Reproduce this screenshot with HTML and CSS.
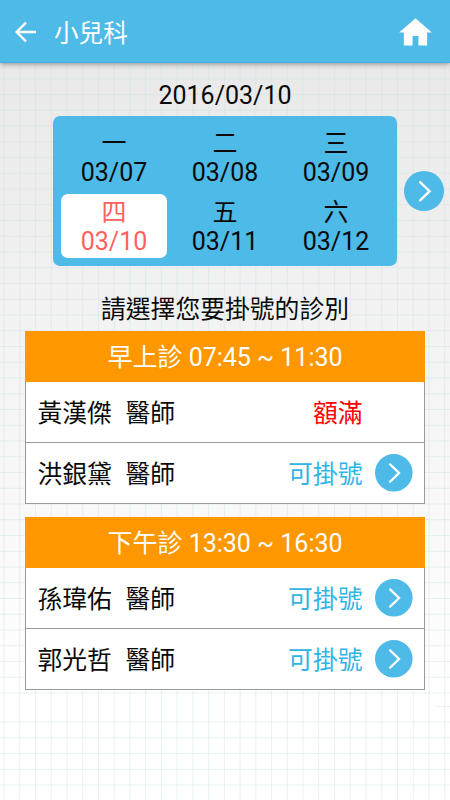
FILE: index.html
```html
<!DOCTYPE html>
<html lang="zh-Hant">
<head>
<meta charset="utf-8">
<meta name="viewport" content="width=device-width, initial-scale=1">
<title>小兒科</title>
<link rel="stylesheet" href="styles.css">
</head>
<body>
<div class="app">
  <header class="bar">
    <svg class="back" viewBox="0 0 22 22"><path d="M21 11H2M11 1.6L1.6 11l9.4 9.4"/></svg>
    <h1>小兒科</h1>
    <svg class="home" viewBox="0 0 34 30"><path d="M17 .8L33.8 15.6H29V29H20V19h-6v10H5V15.6H.2z"/></svg>
  </header>
  <main>
    <p class="today">2016/03/10</p>
    <section class="picker">
      <div class="week">
        <div class="day"><span>一</span><span>03/07</span></div>
        <div class="day"><span>二</span><span>03/08</span></div>
        <div class="day"><span>三</span><span>03/09</span></div>
        <div class="day selected"><span>四</span><span>03/10</span></div>
        <div class="day"><span>五</span><span>03/11</span></div>
        <div class="day"><span>六</span><span>03/12</span></div>
      </div>
      <svg class="go next" viewBox="0 0 38 38"><circle cx="19" cy="19" r="19"/><path d="M15.3 10.5l9 8.7-9 8.7"/></svg>
    </section>
    <p class="prompt">請選擇您要掛號的診別</p>
    <section class="session">
      <h2>早上診 07:45 ~ 11:30</h2>
      <div class="row"><span class="name">黃漢傑</span><span>醫師</span><span class="status full">額滿</span></div>
      <div class="row"><span class="name">洪銀黛</span><span>醫師</span><span class="status">可掛號</span><svg class="go" viewBox="0 0 38 38"><circle cx="19" cy="19" r="19"/><path d="M15.3 10.5l9 8.7-9 8.7"/></svg></div>
    </section>
    <section class="session">
      <h2>下午診 13:30 ~ 16:30</h2>
      <div class="row"><span class="name">孫瑋佑</span><span>醫師</span><span class="status">可掛號</span><svg class="go" viewBox="0 0 38 38"><circle cx="19" cy="19" r="19"/><path d="M15.3 10.5l9 8.7-9 8.7"/></svg></div>
      <div class="row"><span class="name">郭光哲</span><span>醫師</span><span class="status">可掛號</span><svg class="go" viewBox="0 0 38 38"><circle cx="19" cy="19" r="19"/><path d="M15.3 10.5l9 8.7-9 8.7"/></svg></div>
    </section>
  </main>
</div>
</body>
</html>
```
FILE: styles.css
```css
* { box-sizing: border-box; }
body { margin: 0; }
h1, h2, p { margin: 0; font-weight: 400; }

.app {
  width: 450px;
  height: 800px;
  overflow: hidden;
  font: 400 25px/30px Roboto, "Noto Sans CJK TC", sans-serif;
  color: #0a0a0a;
  --line: rgba(205, 224, 230, .45);
  --clear: rgba(205, 224, 230, 0);
  background:
    repeating-linear-gradient(90deg, var(--clear) 0, var(--line) 1px, var(--clear) 2px 15.74px) 2.5px 0 / 460px 100% no-repeat,
    repeating-linear-gradient(var(--clear) 0, var(--line) 1px, var(--clear) 2px 15.75px) 0 62px / 100% 633px no-repeat,
    repeating-linear-gradient(var(--clear) 0, var(--line) 1px, var(--clear) 2px 15.75px) 0 721px / 100% 79px no-repeat,
    linear-gradient(var(--line), var(--line)) 436px 706px / 14px 1px no-repeat,
    linear-gradient(#e9e9e9 62px, #ededed 180px, #f3f3f3 340px, #fafafa 560px, #fff 690px);
}

.bar {
  display: flex;
  align-items: center;
  position: relative;
  height: 63px;
  padding: 2px 18px 0 15px;
  background: #4dbae8;
  border-bottom: 1px solid #48add8;
  color: #fff;
  box-shadow: 0 1px 6px rgba(0, 0, 0, .38);
}
.bar h1 { margin-left: 17px; padding-top: 3px; font-size: 24.6px; line-height: 36px; }
.back { width: 22px; height: 22px; fill: none; stroke: #fff; stroke-width: 2.4; }
.home { width: 33px; height: 30px; margin-left: auto; fill: #fff; }

main { padding: 17px 25px 0; }
.today { line-height: 32px; text-align: center; }

.picker {
  display: flex;
  align-items: center;
  gap: 7px;
  margin: 4px -19px 0 28px;
}
.week {
  display: grid;
  grid-template-columns: repeat(3, 106px);
  grid-template-rows: 64px 64px;
  gap: 5px;
  width: 344px;
  height: 150px;
  padding: 9px 8px;
  background: #4dbae8;
  border-radius: 7px;
}
.day {
  display: flex;
  flex-direction: column;
  align-items: center;
  padding-top: 3px;
  border-radius: 7px;
}
.day span { line-height: 30px; }
.day span:first-child { padding-top: 1px; margin-bottom: -1px; }
.selected { background: #fff; color: #ff625e; }

.go { flex: none; width: 37.6px; height: 37.6px; margin-bottom: 1px; overflow: visible; }
.go circle { fill: #4dbae8; }
.go path { fill: none; stroke: #fff; stroke-width: 2.3; stroke-linecap: round; stroke-linejoin: miter; }
.next { width: 40px; height: 40px; margin-bottom: 0; }

.prompt { margin-top: 26px; line-height: 36px; font-size: 24.8px; text-align: center; }

.session { margin-top: 3px; width: 400px; }
.session + .session { margin-top: 13px; }
.session h2 {
  height: 51px;
  padding-top: 1px;
  background: #ff9800;
  color: #fff;
  font-size: 25px;
  line-height: 51px;
  text-align: center;
}
.row {
  display: flex;
  align-items: center;
  height: 61px;
  padding: 0 11.4px;
  background: #fff;
  border: 1px solid #999;
  border-top: 0;
  font-size: 24.8px;
}
.row span { padding-top: 4px; }
.name { margin-right: 13.6px; }
.status { margin-left: auto; margin-right: 12.5px; color: #2fb4e4; }
.full { margin-right: 50px; color: #f00; }
```
